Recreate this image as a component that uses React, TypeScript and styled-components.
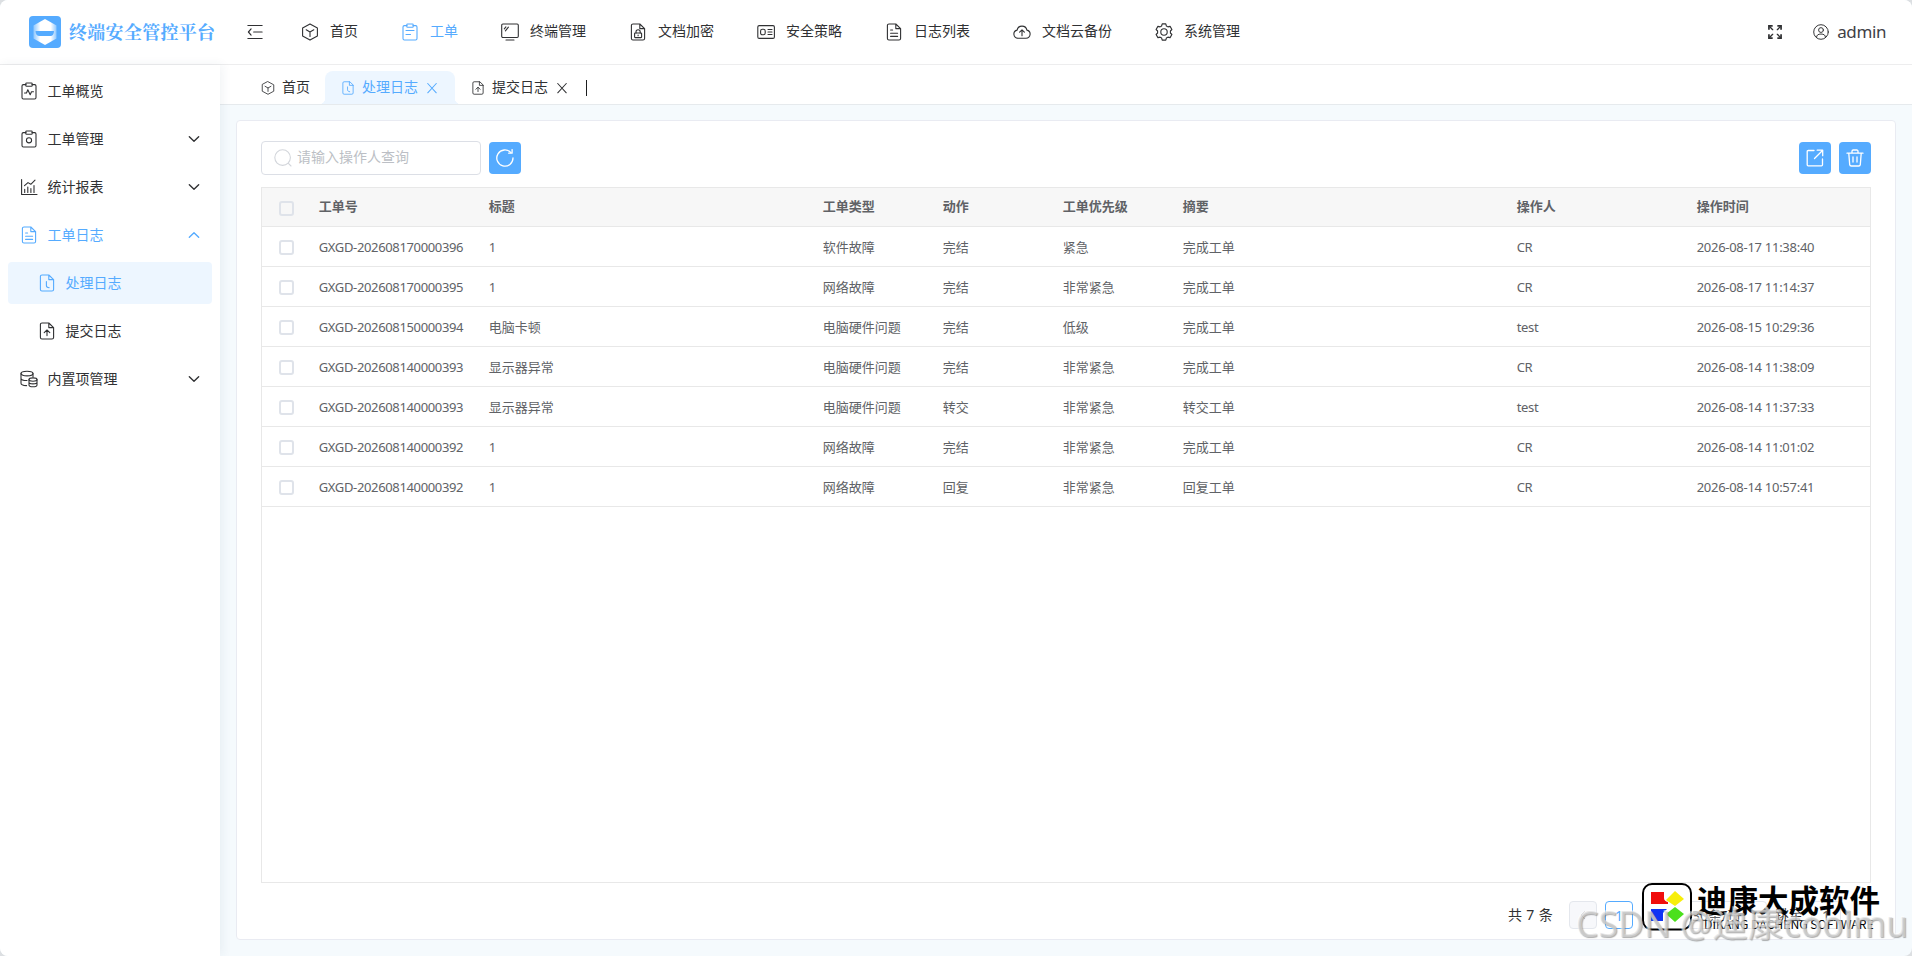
import React from 'react';
import styled, { createGlobalStyle, css } from 'styled-components';

const BLUE = '#55abff';
const INK = '#303133';

const GlobalStyle = createGlobalStyle`
  * { box-sizing: border-box; }
  html, body { margin: 0; padding: 0; }
  body {
    width: 1912px;
    height: 956px;
    overflow: hidden;
    background: #dcdfe2;
    font-family: 'Noto Sans', 'Noto Sans CJK SC', sans-serif;
    font-size: 14px;
    color: ${INK};
  }
`;

const Shell = styled.div`
  position: relative;
  display: flex;
  flex-direction: column;
  width: 1912px;
  height: 956px;
  overflow: hidden;
  border-radius: 8px;
  background: #f5fafd;
`;

const Header = styled.header`
  display: flex;
  align-items: center;
  height: 65px;
  flex: none;
  padding: 0 26px 1px 29px;
  background: #fff;
  border-bottom: 1px solid #ededee;
`;

const Logo = styled.svg`
  width: 32px;
  height: 32px;
  flex: none;
`;

const Brand = styled.h1`
  margin: 0 0 0 8px;
  width: 178px;
  padding-bottom: 2px;
  font-family: 'Noto Serif CJK SC', 'Noto Sans CJK SC', serif;
  font-size: 18px;
  letter-spacing: 0.3px;
  font-weight: 700;
  line-height: 26px;
  color: ${BLUE};
`;

const Glyph = styled.svg<{ $size: number }>`
  width: ${(p) => p.$size}px;
  height: ${(p) => p.$size}px;
  flex: none;
  fill: none;
  stroke: currentColor;
  stroke-width: 1.1;
  stroke-linecap: round;
  stroke-linejoin: round;
`;

const TopNav = styled.nav`
  display: flex;
  gap: 43px;
  margin-left: 38px;
`;

const TopItem = styled.a<{ $active?: boolean }>`
  display: flex;
  align-items: center;
  gap: 11px;
  white-space: nowrap;
  color: ${(p) => (p.$active ? BLUE : INK)};
`;

const Label = styled.span`
  padding-bottom: 2px;
  line-height: 20px;
`;

const UserArea = styled.div`
  display: flex;
  align-items: center;
  margin-left: auto;
  color: ${INK};
`;

const UserGap = styled.span`
  width: 31px;
`;

const UserName = styled.span`
  margin-left: 8px;
  font-size: 17px;
  letter-spacing: -0.4px;
  line-height: 24px;
  color: #3f4145;
`;

const Body = styled.div`
  display: flex;
  flex: 1;
  min-height: 0;
`;

const Sidebar = styled.aside`
  width: 220px;
  flex: none;
  padding: 5px 8px;
  background: #fff;
  box-shadow: 2px 0 10px rgba(40, 70, 100, 0.07);
  z-index: 1;
`;

const SideItem = styled.a<{ $active?: boolean; $open?: boolean; $sub?: boolean }>`
  display: flex;
  align-items: center;
  height: 42px;
  margin-bottom: 6px;
  padding: 0 11px 0 ${(p) => (p.$sub ? 30 : 12)}px;
  border-radius: 4px;
  color: ${(p) => (p.$active || p.$open ? BLUE : INK)};
  background: ${(p) => (p.$active ? '#edf6ff' : 'transparent')};
`;

const SideLabel = styled.span`
  flex: 1;
  margin-left: 9.5px;
  padding-bottom: 1px;
  line-height: 20px;
`;

const Main = styled.main`
  display: flex;
  flex: 1;
  flex-direction: column;
  min-width: 0;
`;

const TabBar = styled.div`
  display: flex;
  align-items: flex-end;
  height: 40px;
  flex: none;
  padding-left: 27px;
  background: #fff;
  border-bottom: 1px solid #e6eaed;
`;

const Tab = styled.div<{ $active?: boolean }>`
  position: relative;
  display: flex;
  align-items: center;
  height: 33px;
  gap: 7px;
  padding: 0 15px 0 14px;
  color: ${(p) => (p.$active ? BLUE : INK)};
  ${(p) =>
    p.$active &&
    css`
      background: #edf6ff;
      border-radius: 8px 8px 0 0;
      padding: 0 16px;
      margin-right: 2px;
      &::before,
      &::after {
        content: '';
        position: absolute;
        bottom: 0;
        width: 6px;
        height: 6px;
      }
      &::before {
        left: -6px;
        background: radial-gradient(circle at 0 0, transparent 6px, #edf6ff 6.5px);
      }
      &::after {
        right: -6px;
        background: radial-gradient(circle at 100% 0, transparent 6px, #edf6ff 6.5px);
      }
    `}
`;

const Caret = styled.i`
  width: 1px;
  height: 16px;
  margin: 0 0 8px 2px;
  background: #1d1e1f;
`;

const Panel = styled.section`
  display: flex;
  flex: 1;
  flex-direction: column;
  margin: 15px 16px 16px;
  padding: 20px 24px 0;
  background: #fff;
  border: 1px solid #e9ebf2;
  border-radius: 4px;
`;

const Toolbar = styled.div`
  display: flex;
  align-items: center;
  gap: 8px;
  height: 34px;
  margin-bottom: 12px;
`;

const SearchBox = styled.label`
  display: flex;
  align-items: center;
  gap: 5px;
  width: 220px;
  height: 34px;
  padding: 0 12px;
  border: 1px solid #dcdfe6;
  border-radius: 4px;
  color: #bcbfc5;
`;

const SquareButton = styled.button<{ $push?: boolean }>`
  display: flex;
  align-items: center;
  justify-content: center;
  width: 32px;
  height: 32px;
  padding: 0;
  margin-left: ${(p) => (p.$push ? 'auto' : 0)};
  border: 0;
  border-radius: 4px;
  color: #fff;
  background: ${BLUE};
`;

const Table = styled.div`
  height: 696px;
  border: 1px solid #e8e8e8;
  font-size: 13px;
  color: #606266;
`;

const Row = styled.div<{ $head?: boolean }>`
  display: grid;
  grid-template-columns: 47px 170px 334px 120px 120px 120px 334px 180px 1fr;
  align-items: center;
  height: ${(p) => (p.$head ? 39 : 40)}px;
  border-bottom: 1px solid #e8e8e8;
  background: ${(p) => (p.$head ? '#f7f7f7' : '#fff')};
  font-weight: ${(p) => (p.$head ? 700 : 400)};
`;

const Cell = styled.span<{ $tracking?: number }>`
  padding-left: 9.7px;
  line-height: 20px;
  white-space: nowrap;
  letter-spacing: ${(p) => p.$tracking || 0}px;
`;

const HeadCell = styled(Cell)`
  padding-bottom: 2px;
`;

const Check = styled.i`
  width: 15px;
  height: 15px;
  margin: 2px 0 0 17px;
  border: 2px solid #dfe3ea;
  border-radius: 3px;
  background: transparent;
`;

const Pager = styled.div`
  display: flex;
  align-items: center;
  gap: 8px;
  height: 28px;
  margin: 18px 0 0 1247px;
`;

const Total = styled.span`
  width: 53px;
  line-height: 20px;
  word-spacing: 0.7px;
  white-space: nowrap;
`;

const Jump = styled.span`
  line-height: 20px;
`;

const PageBox = styled.span<{ $active?: boolean; $wide?: number }>`
  display: flex;
  align-items: center;
  padding-left: ${(p) => (p.$wide && p.$wide > 40 ? 14 : 0)}px;
  justify-content: ${(p) => (p.$wide && p.$wide > 40 ? 'flex-start' : 'center')};
  flex: none;
  width: ${(p) => p.$wide || 28}px;
  height: 28px;
  border: 1px solid ${(p) => (p.$active ? BLUE : '#e4e7ed')};
  border-radius: 4px;
  color: ${(p) => (p.$active ? BLUE : '#606266')};
  background: ${(p) => (p.$active || p.$wide ? '#fff' : '#f7f8fb')};
`;

const Watermark = styled.div`
  position: absolute;
  left: 1576px;
  top: 898px;
  z-index: 2;
  font-size: 35.6px;
  line-height: 50px;
  white-space: nowrap;
  color: rgba(220, 220, 220, 0.6);
  text-shadow: 1px 1px 1px rgba(120, 120, 120, 0.6), -1px -1px 0 rgba(255, 255, 255, 0.5);
`;

const Vendor = styled.div`
  position: absolute;
  left: 1642px;
  top: 883px;
  z-index: 1;
  display: flex;
  gap: 5px;
  color: #000;
`;

const VendorText = styled.div`
  display: flex;
  flex-direction: column;
  margin-top: -1px;
`;

const VendorName = styled.strong`
  font-family: 'Noto Sans CJK SC', sans-serif;
  font-size: 30.5px;
  font-weight: 700;
  line-height: 34px;
  white-space: nowrap;
`;

const VendorSub = styled.span`
  margin: 1px 0 0 7px;
  font-family: 'Noto Sans CJK SC', sans-serif;
  font-size: 12.2px;
  line-height: 14px;
  white-space: nowrap;
`;

const fileOutline = (
  <path d="M10.800 1H4a1.600 1.600 0 0 0-1.600 1.600v12.800A1.600 1.600 0 0 0 4 17h10a1.600 1.600 0 0 0 1.600-1.600V5.600zM10.800 1v4.600h4.800" />
);

const clipOutline = (
  <>
    <path d="M6 2.600H3.400a1.400 1.400 0 0 0-1.400 1.400v11.600a1.400 1.400 0 0 0 1.400 1.400h11.200a1.400 1.400 0 0 0 1.400-1.400V4a1.400 1.400 0 0 0-1.400-1.400H12" />
    <rect x="5.800" y="1" width="6.400" height="3.200" rx=".8" />
  </>
);

const shapes: Record<string, React.ReactNode> = {
  cube: (
    <>
      <path d="M9 .9 16.400 4.900v8.200L9 17.100 1.600 13.100V4.900z" />
      <path d="M5.200 6.800 9 9l3.800-2.200M9 9v4.400" />
    </>
  ),
  board: (
    <>
      {clipOutline}
      <path d="M5 7.500h8M5 11.500h4.500" />
    </>
  ),
  pulse: (
    <>
      {clipOutline}
      <path d="M4.500 11h2l1.300-3.200 2.400 5 1.300-3h2" />
    </>
  ),
  ring: (
    <>
      {clipOutline}
      <circle cx="9" cy="10.300" r="2.600" />
    </>
  ),
  screen: (
    <>
      <rect x=".7" y="1" width="16.600" height="13.500" rx="1.200" />
      <path d="M5 17h8M3.300 5.800l1.600-1.900M4.400 7.800l3-3.600" />
    </>
  ),
  fileLock: (
    <>
      {fileOutline}
      <rect x="5.600" y="10" width="7" height="4.600" rx=".6" />
      <path d="M7 10V8.800a2.100 2.100 0 0 1 4.200 0V10M9.100 12v.8" />
    </>
  ),
  idCard: (
    <>
      <rect x=".8" y="2.600" width="16.600" height="12.800" rx="1.400" />
      <rect x="3.600" y="6.200" width="4.600" height="5.600" rx="1.800" />
      <path d="M11 6.500h4M11 9h4M11 11.500h4" />
    </>
  ),
  file: (
    <>
      {fileOutline}
      <path d="M5.600 7h2M5.600 10.200h7M5.600 13.400h7" />
    </>
  ),
  fileClock: (
    <>
      {fileOutline}
      <path d="M8.400 7.600v3.800c0 1.400 1.200 2.200 2.800 2.400" />
    </>
  ),
  fileUp: (
    <>
      {fileOutline}
      <path d="M9 13.600V8.200M6.200 10.600 9 8l2.800 2.600" />
    </>
  ),
  cloud: (
    <>
      <path d="M5 15.200h8a4.100 4.100 0 0 0 .9-8.100 5 5 0 0 0-9.800 0 4.100 4.100 0 0 0 .9 8.100z" />
      <path d="M9 12.800V7M6.600 9.200 9 6.800l2.400 2.400" />
    </>
  ),
  gear: (
    <>
      <path d="M7.200 .9h3.600l.6 2.100 1.500.9 2.200-.5 1.800 3.100L15.400 8v2l1.500 1.500-1.800 3.100-2.200-.5-1.500.9-.6 2.100H7.200L6.600 15l-1.500-.9-2.200.5-1.800-3.100L2.600 10V8L1.100 6.500l1.800-3.100 2.200.5L6.600 3z" />
      <circle cx="9" cy="9" r="3.200" />
    </>
  ),
  stats: (
    <>
      <path d="M1.600 1.500V16.500H17" />
      <path d="M4.700 14.500v-3.200M7.800 14.500V9M10.900 14.500v-4M14 14.500V7.500M4.500 7.700 8 4.600l2.800 1.700 4.200-4.100" />
    </>
  ),
  database: (
    <>
      <ellipse cx="7" cy="3.600" rx="6" ry="2.300" />
      <path d="M1 3.600v9.600c0 1.300 2.400 2.300 5.600 2.400M13 3.600V7M1 8.200c0 1.300 2.400 2.300 6 2.300" />
      <ellipse cx="13" cy="9.600" rx="4" ry="1.700" />
      <path d="M9 9.600v5.300c0 1 1.800 1.800 4 1.800s4-.8 4-1.800V9.600M9 12.200c0 1 1.800 1.700 4 1.700s4-.7 4-1.700" />
    </>
  ),
  fold: <path d="M1 1.700h16M7.500 9H17M1 16.300h16M4.600 5.600 1.600 9l3 3.400" strokeWidth="1.300" />,
  down: <path d="M3 6.200 9 11.800l6-5.600" strokeWidth="1.800" />,
  up: <path d="M3 11.800 9 6.200l6 5.600" strokeWidth="1.800" />,
  close: <path d="m3.500 3.200 11 12M14.500 3.200l-11 12" strokeWidth="1.300" />,
  user: (
    <>
      <circle cx="9" cy="9" r="8.200" />
      <circle cx="9" cy="6.800" r="2.700" />
      <path d="M4 14.800c0-2.300 1.700-3.500 5-3.500s5 1.200 5 3.500" />
    </>
  ),
  expand: (
    <>
      <path d="M1.200 6V1.200H6M12 1.200h4.800V6M16.800 12v4.800H12M6 16.800H1.200V12" strokeWidth="2.200" strokeLinecap="butt" strokeLinejoin="miter" />
      <path d="m2 2 4 4M16 2l-4 4M16 16l-4-4M2 16l4-4" strokeWidth="1.700" />
    </>
  ),
  search: (
    <>
      <circle cx="8.600" cy="8.600" r="7.800" stroke="#d3d6db" />
      <path d="m14.400 14.400 2.600 2.600" stroke="#d3d6db" />
    </>
  ),
  refresh: (
    <>
      <path d="M17 8.800A8.100 8.100 0 1 1 14.900 3.600" strokeWidth="1.300" />
      <path d="M16.100.6v3.600h-3.400" strokeWidth="1.300" />
    </>
  ),
  open: (
    <>
      <path d="M8 1.500H2.200a1 1 0 0 0-1 1v13.300a1 1 0 0 0 1 1h13.300a1 1 0 0 0 1-1V10" strokeWidth="1.300" />
      <path d="M11.200 1.200h5.500v5.500M16.500 1.500 8.500 9.500" strokeWidth="1.300" />
    </>
  ),
  trash: (
    <path
      d="M1 4.200h16M6 4V2.200A1.200 1.200 0 0 1 7.200 1h3.600A1.200 1.200 0 0 1 12 2.200V4M2.800 4.400l.9 11.200A1.600 1.600 0 0 0 5.300 17h7.400a1.600 1.600 0 0 0 1.600-1.400l.9-11.200M7 8v5M11 8v5"
      strokeWidth="1.300"
    />
  ),
  prev: <path d="M11.500 3.500 6 9l5.500 5.500" stroke="#a8abb2" />,
};

const Icon = ({ name, size = 18 }: { name: string; size?: number }) => (
  <Glyph $size={size} viewBox="0 0 18 18">
    {shapes[name]}
  </Glyph>
);

const topItems = [
  ['cube', '首页'],
  ['board', '工单'],
  ['screen', '终端管理'],
  ['fileLock', '文档加密'],
  ['idCard', '安全策略'],
  ['file', '日志列表'],
  ['cloud', '文档云备份'],
  ['gear', '系统管理'],
];

const sideItems: { icon: string; label: string; arrow?: string; open?: boolean; sub?: boolean; active?: boolean }[] = [
  { icon: 'pulse', label: '工单概览' },
  { icon: 'ring', label: '工单管理', arrow: 'down' },
  { icon: 'stats', label: '统计报表', arrow: 'down' },
  { icon: 'file', label: '工单日志', arrow: 'up', open: true },
  { icon: 'fileClock', label: '处理日志', sub: true, active: true },
  { icon: 'fileUp', label: '提交日志', sub: true },
  { icon: 'database', label: '内置项管理', arrow: 'down' },
];

const columns = ['工单号', '标题', '工单类型', '动作', '工单优先级', '摘要', '操作人', '操作时间'];

const records = [
  ['GXGD-202608170000396', '1', '软件故障', '完结', '紧急', '完成工单', 'CR', '2026-08-17 11:38:40'],
  ['GXGD-202608170000395', '1', '网络故障', '完结', '非常紧急', '完成工单', 'CR', '2026-08-17 11:14:37'],
  ['GXGD-202608150000394', '电脑卡顿', '电脑硬件问题', '完结', '低级', '完成工单', 'test', '2026-08-15 10:29:36'],
  ['GXGD-202608140000393', '显示器异常', '电脑硬件问题', '完结', '非常紧急', '完成工单', 'CR', '2026-08-14 11:38:09'],
  ['GXGD-202608140000393', '显示器异常', '电脑硬件问题', '转交', '非常紧急', '转交工单', 'test', '2026-08-14 11:37:33'],
  ['GXGD-202608140000392', '1', '网络故障', '完结', '非常紧急', '完成工单', 'CR', '2026-08-14 11:01:02'],
  ['GXGD-202608140000392', '1', '网络故障', '回复', '非常紧急', '回复工单', 'CR', '2026-08-14 10:57:41'],
];

const trackings = [-0.35, 0, 0, 0, 0, 0, -0.3, -0.28];

export default function App() {
  return (
    <Shell>
      <GlobalStyle />
      <Header>
        <Logo viewBox="0 0 32 32">
          <defs>
            <linearGradient id="hex" x1="0" x2="1">
              <stop offset="0" stopColor="#8fc8ff" />
              <stop offset=".3" stopColor="#fff" />
              <stop offset=".75" stopColor="#fff" />
              <stop offset="1" stopColor="#8fc8ff" />
            </linearGradient>
          </defs>
          <rect width="32" height="32" rx="4" fill={BLUE} />
          <path d="M16 3 27.500 9.500v13L16 29 4.500 22.500v-13z" fill="url(#hex)" />
          <path d="M6.500 15h18.500c0 3-1.500 5-3.500 5h-11c-2.500 0-4-2-4-5z" fill={BLUE} />
        </Logo>
        <Brand>终端安全管控平台</Brand>
        <Icon name="fold" size={16} />
        <TopNav>
          {topItems.map(([icon, label]) => (
            <TopItem key={label} $active={label === '工单'}>
              <Icon name={icon} />
              <Label>{label}</Label>
            </TopItem>
          ))}
        </TopNav>
        <UserArea>
          <Icon name="expand" size={14} />
          <UserGap />
          <Icon name="user" size={16} />
          <UserName>admin</UserName>
        </UserArea>
      </Header>
      <Body>
        <Sidebar>
          {sideItems.map((it) => (
            <SideItem key={it.label} $active={it.active} $open={it.open} $sub={it.sub}>
              <Icon name={it.icon} />
              <SideLabel>{it.label}</SideLabel>
              {it.arrow && <Icon name={it.arrow} size={14} />}
            </SideItem>
          ))}
        </Sidebar>
        <Main>
          <TabBar>
            <Tab>
              <Icon name="cube" size={14} />
              <Label>首页</Label>
            </Tab>
            <Tab $active>
              <Icon name="fileClock" size={14} />
              <Label>处理日志</Label>
              <Icon name="close" size={14} />
            </Tab>
            <Tab>
              <Icon name="fileUp" size={14} />
              <Label>提交日志</Label>
              <Icon name="close" size={14} />
            </Tab>
            <Caret />
          </TabBar>
          <Panel>
            <Toolbar>
              <SearchBox>
                <Icon name="search" />
                <Label>请输入操作人查询</Label>
              </SearchBox>
              <SquareButton>
                <Icon name="refresh" />
              </SquareButton>
              <SquareButton $push>
                <Icon name="open" />
              </SquareButton>
              <SquareButton>
                <Icon name="trash" />
              </SquareButton>
            </Toolbar>
            <Table>
              <Row $head>
                <Check />
                {columns.map((c) => (
                  <HeadCell key={c}>{c}</HeadCell>
                ))}
              </Row>
              {records.map((r, i) => (
                <Row key={i}>
                  <Check />
                  {r.map((v, j) => (
                    <Cell key={j} $tracking={trackings[j]}>
                      {v}
                    </Cell>
                  ))}
                </Row>
              ))}
            </Table>
            <Pager>
              <Total>共 7 条</Total>
              <PageBox>
                <Icon name="prev" size={12} />
              </PageBox>
              <PageBox $active>1</PageBox>
              <PageBox />
              <PageBox $wide={90}>30条/页</PageBox>
              <Jump>跳至</Jump>
              <PageBox $wide={30}>1</PageBox>
            </Pager>
          </Panel>
        </Main>
      </Body>
      <Vendor>
        <svg width="50" height="48" viewBox="0 0 50 48">
          <rect x="1" y="1" width="48" height="45.500" rx="9" fill="#fff" stroke="#000" strokeWidth="2" />
          <path d="M9 9h13v6q0 3 4 4v2H9z" fill="#f00d0d" />
          <path d="m33 8 9 8-9 7-9-6z" fill="#f7ee0a" />
          <path d="M9 26h16l-4 4v8H9z" fill="#1033f5" />
          <path d="m33 24 9 7-9 8-9-8z" fill="#4be01c" />
        </svg>
        <VendorText>
          <VendorName>迪康大成软件</VendorName>
          <VendorSub>DIKANG DACHENG SOFTWARE</VendorSub>
        </VendorText>
      </Vendor>
      <Watermark>CSDN @迪康coolmu</Watermark>
    </Shell>
  );
}
